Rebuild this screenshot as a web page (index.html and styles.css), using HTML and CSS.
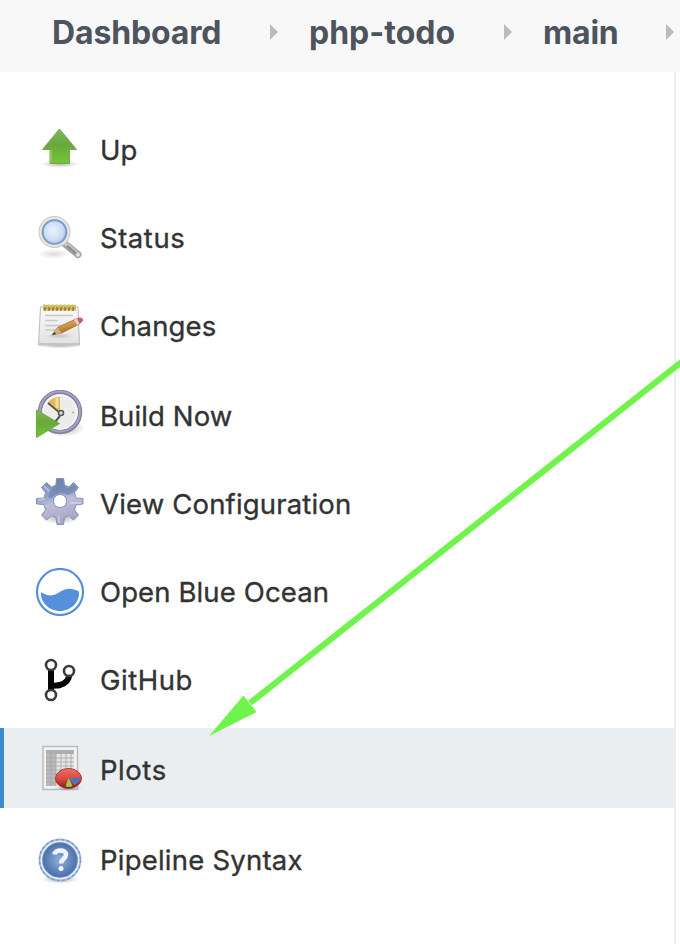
FILE: index.html
```html
<!DOCTYPE html>
<html lang="en">
<head>
<meta charset="utf-8">
<title>php-todo main</title>
<link rel="stylesheet" href="styles.css">
</head>
<body>
<header class="breadcrumbs">
  <a class="crumb crumb-home">Dashboard</a>
  <i class="chevron"></i>
  <a class="crumb crumb-project">php-todo</a>
  <i class="chevron"></i>
  <a class="crumb crumb-branch">main</a>
  <i class="chevron"></i>
</header>
<main class="page">
  <nav class="tasks">
    <a class="task">
      <svg class="icon icon-low" viewBox="0 0 48 48">
        <defs>
          <linearGradient id="green" x2="0" y2="1"><stop stop-color="#83b85f"/><stop offset=".45" stop-color="#68a83a"/><stop offset="1" stop-color="#74c634"/></linearGradient>
          <radialGradient id="shadow"><stop stop-color="#777" stop-opacity=".55"/><stop offset="1" stop-color="#888" stop-opacity="0"/></radialGradient>
        </defs>
        <ellipse cx="24" cy="36" rx="19" ry="4" fill="url(#shadow)"/>
        <path d="M23.500 1 40.500 21.500H33.500V35.500H14V21.500H6.500Z" fill="url(#green)" stroke="#73a94d"/>
        <path d="M15 34.500V22" stroke="#a4d57f" stroke-width="1"/>
      </svg>
      <span class="label">Up</span>
    </a>
    <a class="task">
      <svg class="icon icon-low" viewBox="0 0 48 48">
        <defs><radialGradient id="lens" cx=".45" cy=".45"><stop stop-color="#e9f2fc"/><stop offset=".7" stop-color="#cbddf3"/><stop offset="1" stop-color="#a9c5e8"/></radialGradient></defs>
        <ellipse cx="18" cy="38" rx="17" ry="5" fill="url(#shadow)" opacity=".5"/>
        <path d="M28.500 27.500 42 38.500" stroke="#a3a3a3" stroke-width="7" stroke-linecap="round"/>
        <path d="M29.500 27.500 42 38" stroke="#c5c5c3" stroke-width="4" stroke-linecap="round"/>
        <path d="M31 30 40 37.500" stroke="#8d8d8b" stroke-width="2.500"/>
        <circle cx="42" cy="39" r="1.800" fill="#e5e5e5"/>
        <circle cx="18.500" cy="16" r="14" fill="url(#lens)" stroke="#c6c6c3" stroke-width="4"/>
        <circle cx="18.500" cy="16" r="14" fill="none" stroke="#e9e9e6" stroke-width="2"/>
        <circle cx="18.500" cy="16" r="11.800" fill="none" stroke="#7c9fd0" stroke-width="2"/>
      </svg>
      <span class="label label-wide">Status</span>
    </a>
    <a class="task">
      <svg class="icon icon-low" viewBox="0 0 48 48">
        <defs>
          <linearGradient id="paper" x2="0" y2="1"><stop stop-color="#fafafa"/><stop offset="1" stop-color="#e2e2e2"/></linearGradient>
          <linearGradient id="pencil" x1="0" y1="0" x2=".5" y2="1"><stop stop-color="#e9bd70"/><stop offset=".5" stop-color="#d89c45"/><stop offset="1" stop-color="#90621f"/></linearGradient>
        </defs>
        <ellipse cx="24" cy="41.500" rx="23" ry="3" fill="url(#shadow)"/>
        <path d="M4.500 3H42L43.500 41H2.500Z" fill="url(#paper)" stroke="#bdbdbd"/>
        <path d="M2.500 39H43.500V41H2.500Z" fill="#c5c5c5"/>
        <path d="M7 1H40V6.500H7Z" fill="#cdb758"/>
        <path d="M8 5H40" stroke="#99863b" stroke-width="3.500" stroke-dasharray="2 2"/>
        <path d="M7.500 1.500H40" stroke="#d9c66d" stroke-width="2.500" stroke-dasharray="2 2"/>
        <path d="M9 11.500H37M9 16.500H22M9 21.500H32M9 26H20" stroke="#c9c9cb" stroke-width="1.500"/>
        <ellipse cx="23" cy="32" rx="16" ry="3" fill="url(#shadow)" opacity=".6"/>
        <path d="M16 31 21.500 23.500 41 14.500 43.500 20 25.500 29Z" fill="url(#pencil)" stroke="#9b7037" stroke-width=".8"/>
        <path d="M16 31 21.500 23.500 25.500 29Z" fill="#d1b17c"/><path d="m16 31 2.500-3 1.500 2Z" fill="#393329"/>
        <path d="m38 16 3-1.500c4-2 6 2 3.500 5L41 21Z" fill="#d9d6cf"/>
        <path d="m41 14.500 2-1c3-.5 5 2 3.500 4L43.500 20Z" fill="#da5960"/>
      </svg>
      <span class="label">Changes</span>
    </a>
    <a class="task task-low">
      <svg class="icon" viewBox="0 0 48 48">
        <ellipse cx="29" cy="38" rx="20" ry="9" fill="url(#shadow)"/>
        <circle cx="24" cy="22" r="20" fill="#ececea" stroke="#8280a2" stroke-width="4.500"/>
        <circle cx="24" cy="21.500" r="20" fill="none" stroke="#a5a3bf" stroke-width="2"/>
        <circle cx="24" cy="22" r="17" fill="none" stroke="#fafaf5" stroke-width="1.500"/>
        <path d="M24 21V7Q17 7 11.500 12.500Z" fill="#dfb95c"/><path d="M21 18V8" stroke="#f4dd9b" stroke-width="3"/>
        <path d="m12 13 12 10" stroke="#5b533e" stroke-width="1.700"/><circle cx="25" cy="23" r="2.500" fill="#ddd" stroke="#555" stroke-width="1.500"/><path d="m24 26-5 6" stroke="#555" stroke-width="2"/>
        <circle cx="37" cy="22.500" r="1" fill="#aaa"/>
        <path d="M.5 20 23.500 33.500.5 47.500Z" fill="url(#green)" stroke="#6aad42"/>
      </svg>
      <span class="label">Build Now</span>
    </a>
    <a class="task task-low">
      <svg class="icon" viewBox="0 0 48 48">
        <defs><linearGradient id="gear" x2=".3" y2="1"><stop stop-color="#6983b5"/><stop offset=".45" stop-color="#94a5ca"/><stop offset=".6" stop-color="#bebdd9"/><stop offset="1" stop-color="#a9a7c8"/></linearGradient></defs>
        <ellipse cx="24" cy="40" rx="20" ry="6" fill="url(#shadow)"/>
        <path fill="url(#gear)" fill-rule="evenodd" stroke="#8992b1" stroke-width="1" stroke-linejoin="round" d="M20.500 0H27.500L28.500 7 33 9 37.500 4.500 42.500 9.500 38.500 14.500 40 20 47 20.500V26L40 27 38.500 32 42.500 37 37.500 42 32.500 38 28.500 39.500 27.500 46.500H21L20 39.500 15.500 38 10.500 42 5.500 37 9.500 32 8 26.500.5 26V20.500L8 20 9.500 14.500 5.500 9.500 10.500 4.500 15.500 9 20 7ZM24 16.500a6.500 6.500 0 1 0 .1 0Z"/>
        <path d="M21 1H27L28 8 33 10 38 6 41 10 37 15 32 17Q23 12 16 20L12 19 16 10 20 8Z" fill="#637ba9" opacity=".55"/>
        <path d="m8 8 5 5M9 21 2 22M34 25 45 25M23 38v7" stroke="#e0e3f0" stroke-width="2" opacity=".5"/>
      </svg>
      <span class="label label-config">View Configuration</span>
    </a>
    <a class="task task-ocean">
      <svg class="icon" viewBox="0 0 48 48">
        <circle cx="24" cy="24" r="23" fill="#fff" stroke="#568fdc" stroke-width="2.200"/>
        <path d="M5 24C11 28 16 29 23 24.500S35 19.500 43 23.500C44 34 35 43 24 43S4 34 5 24Z" fill="#568fdc"/>
      </svg>
      <span class="label">Open Blue Ocean</span>
    </a>
    <a class="task">
      <svg class="icon" viewBox="0 0 48 48">
        <g fill="none" stroke="#050505">
          <path d="M15 12V36M15 31C17 29 20 30 24 29 30 27.500 33 23 33.500 18" stroke-width="6"/>
          <g fill="#fff" stroke="#3b3b3b" stroke-width="2.600"><circle cx="15" cy="9" r="5"/><circle cx="33" cy="15" r="5"/><circle cx="15" cy="39" r="5"/></g>
        </g>
      </svg>
      <span class="label label-wide">GitHub</span>
    </a>
    <a class="task task-active task-low">
      <svg class="icon" viewBox="0 0 48 48">
        <defs><linearGradient id="pie" x2="0" y2="1"><stop stop-color="#ed706b"/><stop offset=".55" stop-color="#d64640"/><stop offset="1" stop-color="#791d1b"/></linearGradient></defs>
        <path d="M7 2.500H41.500V45.500H7Z" fill="#f3f3f3" stroke="#bcbcbc" stroke-width="1.500"/>
        <path d="M10 6H38V42H10Z" fill="#e5e5e5"/><path d="M10 6H20V42H10Z" fill="#b9b9b9"/><path d="M10 6H38V10H10Z" fill="#b0b0b0"/>
        <path d="M10 14H38M10 18H38M10 22H38M10 26H38M10 30H38M10 34H38M10 38H38M15 6V42M20 6V42M25 6V42M30 6V42M35 6V42" stroke="#a5a5a5" stroke-width=".8"/>
        <ellipse cx="32" cy="44" rx="15" ry="3" fill="url(#shadow)"/>
        <ellipse cx="32.500" cy="34.500" rx="13" ry="10" fill="url(#pie)" stroke="#a93531"/>
        <path d="M33 34H44Q43 39 38.500 41Z" fill="#4779bd"/><path d="m32.500 34-3 8.500q4 1 7-.5Z" fill="#9bcd48"/>
      </svg>
      <span class="label label-wide">Plots</span>
    </a>
    <a class="task task-last">
      <svg class="icon" viewBox="0 0 48 48">
        <defs><radialGradient id="help"><stop stop-color="#92b1dc"/><stop offset="1" stop-color="#4b70aa"/></radialGradient></defs>
        <ellipse cx="24" cy="43" rx="19" ry="5" fill="url(#shadow)"/>
        <circle cx="24" cy="24" r="20.500" fill="#e8eef7" stroke="#a3b9d8" stroke-width="1.800"/>
        <circle cx="24" cy="24" r="20.500" fill="none" stroke="#7f9dc8" stroke-width="1.500" stroke-dasharray="3 2.400"/>
        <circle cx="24" cy="24" r="17" fill="url(#help)" stroke="#5b7cae" stroke-width="1.500"/>
        <path d="M18.500 18.500C19 13 30 13 30 18.500 30 23 25 23 25 27.500" fill="none" stroke="#f1f5fb" stroke-width="4.500"/><circle cx="25" cy="32.500" r="2.500" fill="#f1f5fb"/>
      </svg>
      <span class="label label-syntax">Pipeline Syntax</span>
    </a>
  </nav>
</main>
<svg class="pointer" viewBox="0 0 680 944"><path d="M684 360 250 703" fill="none" stroke="#70f44b" stroke-width="6"/><path d="M209 736 243.500 695.500 256.500 712Z" fill="#70f44b"/></svg>
</body>
</html>
```

FILE: styles.css
```css
* { box-sizing: border-box; }
body {
  margin: 0;
  width: 680px;
  height: 944px;
  overflow: hidden;
  background: #fff;
  color: #333;
  font-family: Inter, "Liberation Sans", sans-serif;
}
.breadcrumbs {
  display: flex;
  align-items: center;
  height: 72px;
  padding: 0 0 8px 52px;
  background: #f8f8f8;
  color: #4d545d;
  font-size: 32px;
  font-weight: 700;
  line-height: 40px;
  white-space: nowrap;
}
.crumb { flex: none; padding-top: 2px; }
.crumb-home { width: 218px; letter-spacing: -0.15px; }
.crumb-project { width: 195px; margin-left: 31px; }
.crumb-branch { width: 123px; margin-left: 31px; letter-spacing: -0.2px; }
.chevron {
  flex: none;
  width: 8px;
  height: 16px;
  background: #bbb;
  clip-path: polygon(0 0, 100% 50%, 0 100%);
}
.page {
  width: 676px;
  height: 872px;
  padding-top: 38px;
  border-right: 2px solid #e9edf1;
}
.tasks { display: flex; flex-direction: column; gap: 8px; }
.task {
  display: flex;
  align-items: center;
  gap: 16px;
  height: 80px;
  padding-left: 36px;
}
.task-ocean { margin-top: 2px; }
.task-last { margin-top: 4px; }
.task-active {
  padding-left: 32px;
  border-left: 4px solid #3f8acb;
  background: #eaeef1;
}
.icon { flex: none; width: 48px; height: 48px; }
.icon-low { margin-top: 3px; }
.label {
  padding-bottom: 1px;
  font-size: 27.5px;
  font-weight: 400;
  line-height: 40px;
  letter-spacing: 0.12px;
  white-space: nowrap;
  -webkit-text-stroke: 0.35px #333;
}
.label-wide { letter-spacing: 0.55px; }
.label-config { letter-spacing: 0.17px; }
.label-syntax { letter-spacing: 0.22px; }
.task-low .label { padding-top: 5px; }
.pointer {
  position: absolute;
  top: 0;
  left: 0;
  width: 680px;
  height: 944px;
  pointer-events: none;
}
```
